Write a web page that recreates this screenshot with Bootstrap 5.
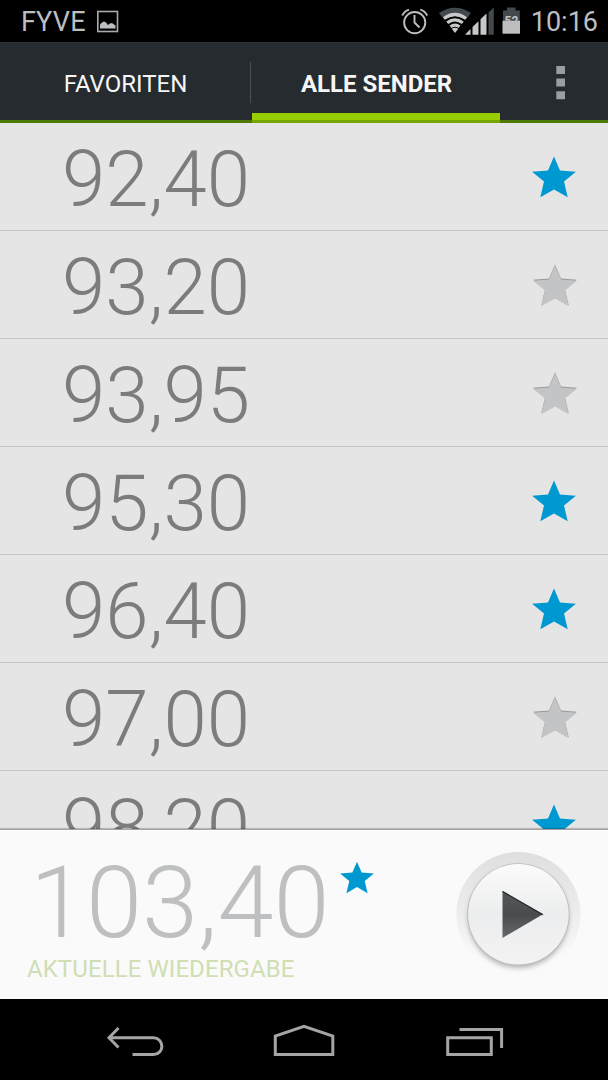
<!DOCTYPE html>
<html lang="de">
<head>
<meta charset="utf-8">
<meta name="viewport" content="width=device-width, initial-scale=1">
<title>Radio</title>
<link href="https://cdn.jsdelivr.net/npm/bootstrap@5.3.0/dist/css/bootstrap.min.css" rel="stylesheet">
<style>
body{font-family:Roboto,"Liberation Sans",sans-serif;background:#000;width:608px;height:1080px;overflow:hidden}
svg{display:block;flex:none}
.statusbar{height:42px;background:#000;color:#bcbec0;font-size:27px;line-height:42px;padding:0 10px 0 21px}
.carrier,.clock{padding-top:2px}
.carrier{width:75px;letter-spacing:.2px}
.tabbar{height:81px;background:#252b2e;border-bottom:3px solid #4d7a04;box-shadow:inset 0 1px #2d3437}
.tab-item{height:81px;width:251px;color:#f6f6f6;font-size:24px;line-height:85px;text-align:center;text-decoration:none;white-space:nowrap}
.tab-current{width:249px;padding-left:2px;font-weight:700;background:linear-gradient(#98cd00,#98cd00) 1px 71px/100% 7px no-repeat,linear-gradient(#75a602,#75a602) 1px 78px/100% 3px no-repeat}
.tab-rule{width:1px;height:41px;margin:20px 0 0 -1px;background:repeating-linear-gradient(#5b6062 0 1px,#3d4346 1px 2px)}
.stations{height:706px;background:#e5e5e5;overflow:hidden}
.station{height:108px;border-bottom:1px solid #c6c6c6;padding:2px 30px 0 62px}
.freq{font-size:78px;font-weight:300;color:#7c7c7c;line-height:104px;padding-top:4px}
.player{height:170px;background:#fafafa;border-top:1px solid #a2a2a2;box-shadow:0 -1px 1px #0003,inset 0 1px #fff;padding:0 27px}
.now-freq{font-size:101px;font-weight:300;color:#bdbfc0;line-height:100px;margin:23px 2px 0 3px}
.now-star{margin-top:31px}
.now-label{font-size:24px;color:#cfdeb3;line-height:28px;margin-top:2px;letter-spacing:.08px}
.navbtns{height:81px;background:#000}
</style>
</head>
<body>
<svg width="0" height="0" class="position-absolute">
<defs>
<linearGradient id="rim" x1="0" y1="0" x2="0" y2="1"><stop offset="0" stop-color="#dfdfdf"/><stop offset=".5" stop-color="#ededed"/><stop offset=".85" stop-color="#fafafa"/></linearGradient>
<linearGradient id="face" x1="0" y1="0" x2="0" y2="1"><stop offset="0" stop-color="#fbfbfb"/><stop offset=".5" stop-color="#ecedee"/><stop offset="1" stop-color="#f3f3f4"/></linearGradient>
<linearGradient id="tri" x1="0" y1="0" x2="0" y2="1"><stop offset="0" stop-color="#54585a"/><stop offset=".5" stop-color="#484c4e"/><stop offset="1" stop-color="#66696b"/></linearGradient>
<filter id="blur" x="-20%" y="-20%" width="140%" height="140%"><feGaussianBlur stdDeviation="2.5"/></filter>
<symbol id="star" viewBox="0 0 44 42"><path d="M22 0.5 28 14.6 43.9 15.7 32 25.5 35.7 41.3 22 33.4 8.3 41.3 12 25.5.1 15.7 16 14.6Z"/></symbol>
</defs>
</svg>

<header class="statusbar d-flex align-items-center">
<span class="carrier">FYVE</span>
<svg width="23" height="23" viewBox="0 0 23 23"><rect x="1.8" y="1.5" width="19.7" height="20" fill="none" stroke="#a9acae" stroke-width="1.6"/><path d="M4 18.5V14.5L6 12.5 8 11.5 10 12.5 12 15 14 13.5 16 13 18 14.5 19.5 15.5V18.5Z" fill="#bcbec0"/></svg>
<svg class="ms-auto" width="131" height="36" viewBox="400 3 131 36">
<g fill="none" stroke="#bcbec0" stroke-width="1.9"><circle cx="414.7" cy="22.6" r="10.6"/><path d="M414.5 15V22.5L419.5 27.5M402.2 15.5Q404.5 11 409 9.6M420.3 9.6Q425 11 427.2 15.5"/></g>
<path d="M439 13Q455 2.5 471 13L467.5 17.5Q455 10 442.5 17.5Z" fill="#41494d"/>
<g fill="none" stroke="#c6c8ca" stroke-width="3.2"><path d="M443.8 18.5Q455 10.5 466.2 18.5M447.2 22.8Q455 17 462.8 22.8M450.5 26.8Q455 23.5 459.5 26.8"/></g>
<path d="M451.7 28.7Q455 26.8 458.3 28.7L455 33Z" fill="#c6c8ca"/>
<path d="M465 34.7 470.5 29V34.7ZM472.5 27 478.5 21.3V34.7H472.5ZM480.5 19.3 486.5 13.5V34.7H480.5Z" fill="#c6c8ca"/>
<path d="M488.5 12.5 493.8 7.5V34.7H488.5Z" fill="#41494d"/>
<path d="M503 10.5H507V7.5H515.5V10.5H519.8V21H503Z" fill="#41494d"/><rect x="502.5" y="20.7" width="17.5" height="13" fill="#bcbec0"/>
<clipPath id="half"><rect x="502" y="8" width="19" height="12.8"/></clipPath><text x="511.5" y="24.6" text-anchor="middle" font-size="12" font-weight="700" fill="#c2c4c6" clip-path="url(#half)">52</text>
</svg>
<span class="clock">10:16</span>
</header>

<nav class="tabbar d-flex">
<a class="tab-item" href="#">FAVORITEN</a>
<span class="tab-rule"></span>
<a class="tab-item tab-current" href="#">ALLE SENDER</a>
<svg class="ms-auto" width="68" height="78" viewBox="540 42 68 78" fill="#9b9d9e"><path d="M556.3 66h8.7v8h-8.7zM556.3 78.6h8.7v8h-8.7zM556.3 91.3h8.7v8h-8.7z"/></svg>
</nav>

<main class="stations">
<div class="station d-flex align-items-center justify-content-between"><span class="freq">92,40</span><svg width="46" height="43" fill="#0098d1"><use href="#star" width="44" height="42"/></svg></div>
<div class="station d-flex align-items-center justify-content-between"><span class="freq">93,20</span><svg width="46" height="43" fill="#c3c4c5"><use href="#star" x="1" width="44" height="42" fill="#96989a"/><use href="#star" x="1" y="1" width="44" height="42"/></svg></div>
<div class="station d-flex align-items-center justify-content-between"><span class="freq">93,95</span><svg width="46" height="43" fill="#c3c4c5"><use href="#star" x="1" width="44" height="42" fill="#96989a"/><use href="#star" x="1" y="1" width="44" height="42"/></svg></div>
<div class="station d-flex align-items-center justify-content-between"><span class="freq">95,30</span><svg width="46" height="43" fill="#0098d1"><use href="#star" width="44" height="42"/></svg></div>
<div class="station d-flex align-items-center justify-content-between"><span class="freq">96,40</span><svg width="46" height="43" fill="#0098d1"><use href="#star" width="44" height="42"/></svg></div>
<div class="station d-flex align-items-center justify-content-between"><span class="freq">97,00</span><svg width="46" height="43" fill="#c3c4c5"><use href="#star" x="1" width="44" height="42" fill="#96989a"/><use href="#star" x="1" y="1" width="44" height="42"/></svg></div>
<div class="station d-flex align-items-center justify-content-between"><span class="freq">98,20</span><svg width="46" height="43" fill="#0098d1"><use href="#star" width="44" height="42"/></svg></div>
</main>

<section class="player d-flex position-relative">
<div>
<div class="d-flex"><span class="now-freq">103,40</span><svg class="now-star ms-2" width="34" height="34" fill="#0098d1"><use href="#star" width="34" height="33"/></svg></div>
<div class="now-label">AKTUELLE WIEDERGABE</div>
</div>
<svg class="ms-auto" width="126" height="160" viewBox="455 830 126 160">
<circle cx="518.4" cy="914" r="62" fill="url(#rim)"/><circle cx="518.4" cy="917.5" r="50.5" fill="#888" opacity=".6" filter="url(#blur)"/><circle cx="518.4" cy="914.5" r="51.2" fill="#bdbdbd"/><circle cx="518.4" cy="914.3" r="50.3" fill="url(#face)"/>
<path d="M502.5 891 543 914.3 502.5 938Z" fill="url(#tri)"/><path d="M502.5 891.5 543 914.7" stroke="#25282a" stroke-width="1.2"/>
</svg>
</section>

<footer class="navbtns">
<svg width="608" height="81" viewBox="0 999 608 81" fill="none" stroke="#a5a5a5" stroke-width="3">
<path d="M118.5 1028 109 1037.8 118.5 1047.5M109.5 1037.8H153.5A8.3 8.3 0 0 1 153.5 1054.6H132.5"/>
<path d="M275.3 1054.6V1036L304 1026.3 332.8 1036V1054.6Z"/>
<path d="M447.7 1037.8H491.3V1054.6H447.7ZM459.5 1029.4H501.6V1048"/>
</svg>
</footer>
<script src="https://cdn.jsdelivr.net/npm/bootstrap@5.3.0/dist/js/bootstrap.bundle.min.js"></script>
</body>
</html>
